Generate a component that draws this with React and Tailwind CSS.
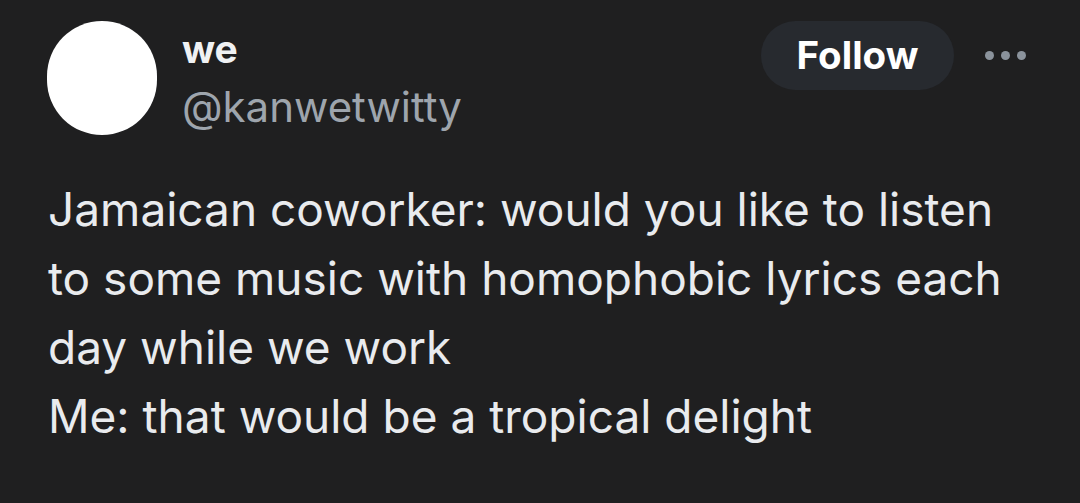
export default function App() {
  return (
    <div className="w-[1080px] h-[503px] bg-[#1f1f20] overflow-hidden" style={{ fontFamily: 'Inter, "Noto Sans", sans-serif' }}>
      <div className="flex items-start pl-[47px] pr-[54px] pt-[21px]">
        <div className="w-[110px] h-[114px] rounded-full bg-white shrink-0" />
        <div className="ml-[25px] flex flex-col flex-1">
          <div className="text-[39px] leading-[40px] font-bold text-[#eff1f3] mt-[8px]">we</div>
          <div className="text-[42px] leading-[44px] text-[#9ea5ad] mt-[16px]">@kanwetwitty</div>
        </div>
        <div className="flex items-center gap-[31px]">
          <div className="w-[193px] h-[69px] rounded-full bg-[#272a2f] flex items-center justify-center text-white text-[38.5px] font-bold">Follow</div>
          <div className="flex gap-[7px]">
            <div className="w-[9px] h-[9px] rounded-full bg-[#8b939c]" />
            <div className="w-[9px] h-[9px] rounded-full bg-[#8b939c]" />
            <div className="w-[9px] h-[9px] rounded-full bg-[#8b939c]" />
          </div>
        </div>
      </div>
      <div className="pl-[48px] pr-[10px] mt-[40px] text-[46px] leading-[69px] text-[#e9ebee] whitespace-nowrap">
        <div>Jamaican coworker: would you like to listen</div>
        <div>to some music with homophobic lyrics each</div>
        <div>day while we work</div>
        <div>Me: that would be a tropical delight</div>
      </div>
    </div>
  );
}
